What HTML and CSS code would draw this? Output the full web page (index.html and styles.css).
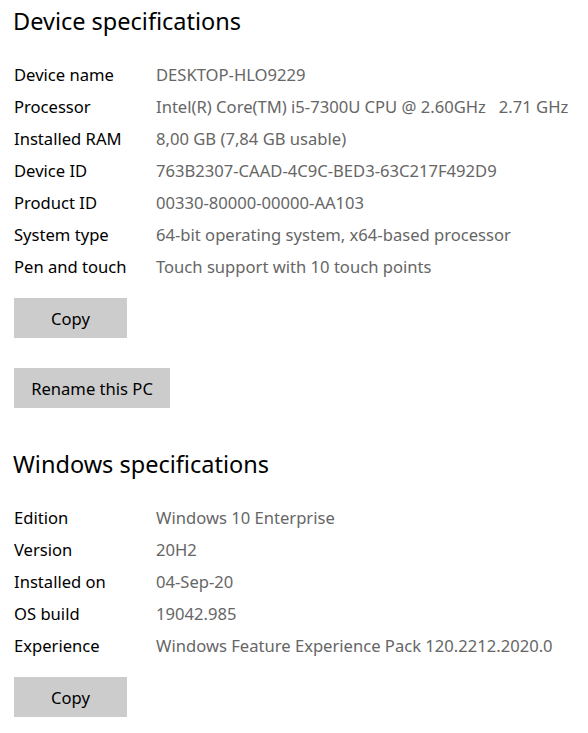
FILE: index.html
```html
<!DOCTYPE html>
<html lang="en">
<head>
<meta charset="utf-8">
<title>About</title>
<link rel="stylesheet" href="styles.css">
</head>
<body>
<main class="page">
  <section class="section">
    <h2 class="heading">Device specifications</h2>
    <dl class="specs">
      <div class="row"><dt>Device name</dt><dd>DESKTOP-HLO9229</dd></div>
      <div class="row"><dt>Processor</dt><dd>Intel(R) Core(TM) i5-7300U CPU @ 2.60GHz&nbsp;&nbsp;&nbsp;2.71 GHz</dd></div>
      <div class="row"><dt>Installed RAM</dt><dd>8,00 GB (7,84 GB usable)</dd></div>
      <div class="row"><dt>Device ID</dt><dd>763B2307-CAAD-4C9C-BED3-63C217F492D9</dd></div>
      <div class="row"><dt>Product ID</dt><dd>00330-80000-00000-AA103</dd></div>
      <div class="row"><dt>System type</dt><dd>64-bit operating system, x64-based processor</dd></div>
      <div class="row"><dt>Pen and touch</dt><dd>Touch support with 10 touch points</dd></div>
    </dl>
    <div class="actions">
      <button class="btn btn-copy" type="button">Copy</button>
      <button class="btn btn-rename" type="button">Rename this PC</button>
    </div>
  </section>
  <section class="section section-windows">
    <h2 class="heading">Windows specifications</h2>
    <dl class="specs">
      <div class="row"><dt>Edition</dt><dd>Windows 10 Enterprise</dd></div>
      <div class="row"><dt>Version</dt><dd>20H2</dd></div>
      <div class="row"><dt>Installed on</dt><dd>04-Sep-20</dd></div>
      <div class="row"><dt>OS build</dt><dd>19042.985</dd></div>
      <div class="row"><dt>Experience</dt><dd>Windows Feature Experience Pack 120.2212.2020.0</dd></div>
    </dl>
    <div class="actions">
      <button class="btn btn-copy" type="button">Copy</button>
    </div>
  </section>
</main>
</body>
</html>
```
FILE: styles.css
```css
* { box-sizing: border-box; }
html, body { margin: 0; padding: 0; background: #ffffff; }
body {
  font-family: "Noto Sans", "Open Sans", sans-serif;
  color: #000000;
}
.page {
  padding: 5px 0 0 14px;
}
.heading {
  margin: 0 0 22px -1px;
  font-size: 23.5px;
  font-weight: 400;
  line-height: 32px;
  color: #000000;
}
.specs {
  margin: 0;
  display: flex;
  flex-direction: column;
}
.row {
  display: grid;
  grid-template-columns: 142px 1fr;
  height: 32px;
  align-items: center;
  font-size: 16.6px;
  line-height: 32px;
  white-space: nowrap;
}
.row dt { color: #000000; }
.row dd { margin: 0; color: #666666; }
.actions {
  margin-top: 15px;
  display: flex;
  flex-direction: column;
  align-items: flex-start;
  gap: 30px;
}
.btn {
  height: 40px;
  border: none;
  background: #cccccc;
  color: #000000;
  font-family: inherit;
  font-size: 16.6px;
  padding: 0;
}
.btn-copy { width: 113px; }
.btn-rename { width: 156px; }
.section-windows { margin-top: 40px; }
```
